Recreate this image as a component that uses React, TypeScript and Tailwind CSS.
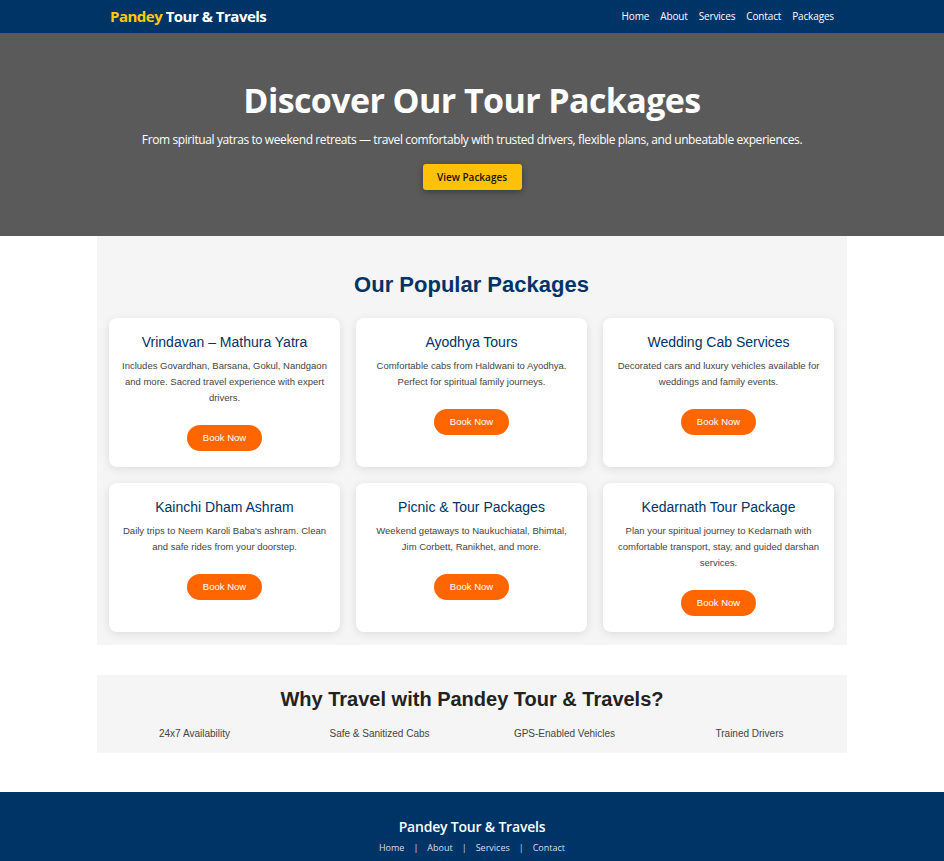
import React from "react";

const packages = [
  {
    title: "Vrindavan – Mathura Yatra",
    text: "Includes Govardhan, Barsana, Gokul, Nandgaon and more. Sacred travel experience with expert drivers.",
  },
  {
    title: "Ayodhya Tours",
    text: "Comfortable cabs from Haldwani to Ayodhya. Perfect for spiritual family journeys.",
  },
  {
    title: "Wedding Cab Services",
    text: "Decorated cars and luxury vehicles available for weddings and family events.",
  },
  {
    title: "Kainchi Dham Ashram",
    text: "Daily trips to Neem Karoli Baba's ashram. Clean and safe rides from your doorstep.",
  },
  {
    title: "Picnic & Tour Packages",
    text: "Weekend getaways to Naukuchiatal, Bhimtal, Jim Corbett, Ranikhet, and more.",
  },
  {
    title: "Kedarnath Tour Package",
    text: "Plan your spiritual journey to Kedarnath with comfortable transport, stay, and guided darshan services.",
  },
];

const features = ["24x7 Availability", "Safe & Sanitized Cabs", "GPS-Enabled Vehicles", "Trained Drivers"];

export default function App() {
  return (
    <div className="min-h-screen bg-white font-['Liberation_Sans',Arial,sans-serif]">
      {/* header */}
      <header className="bg-[#003366] font-['Open_Sans',sans-serif]">
        <div className="mx-auto flex h-[33px] max-w-[750px] items-center justify-between pl-[13px] pr-[13px]">
          <div className="text-[15px] font-bold text-white tracking-[-0.5px]">
            <span className="text-[#ffcc00]">Pandey</span> Tour &amp; Travels
          </div>
          <nav className="flex gap-[11px] text-[10px] tracking-[-0.15px] text-white">
            <a href="#">Home</a>
            <a href="#">About</a>
            <a href="#">Services</a>
            <a href="#">Contact</a>
            <a href="#">Packages</a>
          </nav>
        </div>
      </header>

      {/* hero */}
      <section className="flex h-[203px] flex-col items-center bg-[#5a5a5a] pt-[46px] text-center font-['Open_Sans',sans-serif] text-white">
        <h1 className="text-[34px] font-bold leading-[42px] tracking-[-0.6px]">Discover Our Tour Packages</h1>
        <p className="mt-[10px] text-[12px] leading-[18px] tracking-[-0.4px]">
          From spiritual yatras to weekend retreats — travel comfortably with trusted drivers, flexible plans, and unbeatable experiences.
        </p>
        <button className="mt-[15px] h-[26px] w-[99px] rounded-[3px] bg-[#ffc107] text-[10px] font-semibold text-[#111] shadow-[0_2px_6px_rgba(0,0,0,0.35)]">
          View Packages
        </button>
      </section>

      {/* packages */}
      <section className="mx-auto max-w-[750px] bg-[#f5f5f5] pb-[13px] pl-[12px] pr-[13px] pt-[34px]">
        <h2 className="text-center text-[22px] font-bold leading-[30px] text-[#003366]">Our Popular Packages</h2>
        <div className="mt-[18px] grid grid-cols-3 gap-[16px]">
          {packages.map((p) => (
            <div
              key={p.title}
              className="flex h-[149px] flex-col items-center rounded-[8px] bg-white px-[12px] pt-[14px] text-center shadow-[0_2px_8px_rgba(0,0,0,0.1)]"
            >
              <h3 className="text-[14px] leading-[20px] text-[#003366]">{p.title}</h3>
              <p className="mt-[6px] text-[9.5px] leading-[16px] text-[#444]">{p.text}</p>
              <button className="mt-[19px] h-[26px] w-[75px] rounded-full bg-[#ff6600] text-[9.5px] text-white">
                Book Now
              </button>
            </div>
          ))}
        </div>
      </section>

      {/* why */}
      <section className="mx-auto mt-[30px] max-w-[750px] bg-[#f5f5f5] px-[5px] pb-[13px] pt-[11px]">
        <h2 className="text-center text-[20px] font-bold leading-[26px] text-[#222]">Why Travel with Pandey Tour &amp; Travels?</h2>
        <div className="mt-[16px] grid grid-cols-4 text-center text-[10px] leading-[12px] text-[#444]">
          {features.map((f) => (
            <div key={f}>{f}</div>
          ))}
        </div>
      </section>

      {/* footer */}
      <footer className="mt-[39px] bg-[#003366] pb-[8px] pt-[25px] text-center font-['Open_Sans',sans-serif] text-white">
        <h3 className="text-[14px] font-semibold leading-[20px] tracking-[-0.2px]">Pandey Tour &amp; Travels</h3>
        <div className="mt-[4px] flex justify-center gap-[9px] text-[9px] leading-[14px] text-[#dde]">
          <a href="#">Home</a>
          <span>|</span>
          <a href="#">About</a>
          <span>|</span>
          <a href="#">Services</a>
          <span>|</span>
          <a href="#">Contact</a>
        </div>
      </footer>
    </div>
  );
}
